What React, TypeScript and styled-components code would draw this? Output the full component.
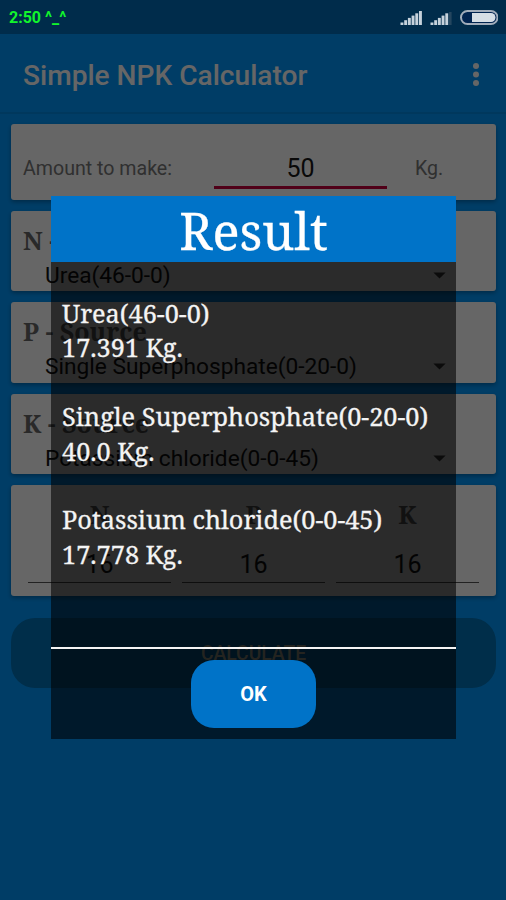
import React from "react";
import styled, { createGlobalStyle } from "styled-components";

const GlobalStyle = createGlobalStyle`
  * { box-sizing: border-box; }
  body { margin: 0; background: #003d68; font-family: Roboto, sans-serif; }
`;

const serif = `"Noto Serif", "Droid Serif", serif`;

const Screen = styled.div`
  position: relative;
  width: 506px;
  height: 900px;
  overflow: hidden;
  background: #0099ff;
`;

const StatusBar = styled.header`
  position: relative;
  z-index: 2;
  height: 34px;
  padding: 0 8px 0 9px;
  display: flex;
  align-items: center;
  justify-content: space-between;
  background: #002c4b;
`;

const Clock = styled.span`
  color: #12f52c;
  font-size: 16px;
  font-weight: 700;
  line-height: 34px;
  padding-top: 2px;
`;

const AppBar = styled.div`
  height: 80px;
  padding: 5px 20px 0 23px;
  display: flex;
  align-items: center;
  justify-content: space-between;
  border-bottom: 2px solid #008de8;
`;

const Title = styled.h1`
  margin: 0;
  color: #fff;
  font-size: 28.1px;
  font-weight: 500;
`;

const Form = styled.main`
  padding: 10px 10px 0 11px;
  display: flex;
  flex-direction: column;
`;

const Card = styled.section<{ $height: number; $gap?: number }>`
  height: ${(p) => p.$height}px;
  margin-bottom: ${(p) => p.$gap ?? 11}px;
  border-radius: 3px;
  background: #fff;
  box-shadow: 0 2px 4px rgba(0, 0, 0, 0.3);
`;

const AmountRow = styled.div`
  display: grid;
  grid-template-columns: 203px 173px 1fr;
  height: 65px;
  padding-top: 24px;
`;

const Caption = styled.span<{ $left: number }>`
  padding-left: ${(p) => p.$left}px;
  color: #787878;
  font-size: 19.6px;
  line-height: 41px;
`;

const Amount = styled.span`
  height: 41px;
  color: #181818;
  font-size: 25px;
  line-height: 41px;
  text-align: center;
  border-bottom: 3px solid #c8003c;
`;

const SourceName = styled.h2`
  margin: 0;
  padding: 13px 0 0 12px;
  color: #686868;
  font: 700 25px/32px ${serif};
  white-space: nowrap;
`;

const Picker = styled.div`
  display: flex;
  align-items: center;
  justify-content: space-between;
  padding: 4px 50px 0 34px;
  color: #151515;
  font-size: 22.7px;
  line-height: 31px;
`;

const Ratios = styled.div`
  display: grid;
  grid-template-columns: repeat(3, 143px);
  column-gap: 11px;
  padding: 13px 0 0 17px;
`;

const Ratio = styled.div`
  height: 85px;
  text-align: center;
  border-bottom: 1px solid #555;
`;

const RatioName = styled.div`
  color: #686868;
  font: 700 25px/32px ${serif};
`;

const RatioValue = styled.div`
  padding-top: 18px;
  color: #181818;
  font-size: 25px;
  line-height: 34px;
`;

const Calculate = styled.button`
  height: 70px;
  border: 0;
  padding: 0;
  border-radius: 24px;
  background: #0073b8;
  color: #d8d8c0;
  font: 500 19.3px/72px Roboto, sans-serif;
`;

const Scrim = styled.div`
  position: absolute;
  inset: 0;
  background: rgba(0, 0, 0, 0.6);
`;

const Dialog = styled.div`
  position: absolute;
  top: 196px;
  left: 51px;
  width: 405px;
  height: 543px;
  display: flex;
  flex-direction: column;
  background: rgba(0, 0, 0, 0.58);
`;

const DialogTitle = styled.h2`
  margin: 0;
  height: 66px;
  background: #0073c8;
  color: #fff;
  font: 400 50.5px/69px ${serif};
  -webkit-text-stroke: 0.3px #fff;
  text-align: center;
`;

const Results = styled.div`
  height: 387px;
  padding: 34px 0 0 11px;
  border-bottom: 2px solid #f4f4f4;
`;

const Result = styled.div`
  height: 103.2px;
  color: #f4f4f4;
  font: 400 25.3px/34.4px ${serif};
  -webkit-text-stroke: 0.3px #f4f4f4;
  white-space: nowrap;
`;

const Ok = styled.button`
  align-self: center;
  width: 125px;
  height: 68px;
  margin-top: 11px;
  padding: 0;
  border: 0;
  border-radius: 23px;
  background: #0073c8;
  color: #fff;
  font: 700 20px/69px Roboto, sans-serif;
`;

const StatusIcons = () => (
  <svg width="100" height="34" viewBox="398 0 100 34">
    <g fill="#c6d2dc">
      {[0, 1, 2, 3, 4, 5].map((i) => (
        <rect key={i} x={400.5 + i * 3.7} y={22.5 - i * 2.3} width="2.9" height={2.5 + i * 2.3} />
      ))}
      {[0, 1, 2, 3, 4].map((i) => (
        <rect key={i} x={430.5 + i * 3.7} y={22.5 - i * 2.3} width="2.9" height={2.5 + i * 2.3} />
      ))}
    </g>
    <rect x="449" y="12" width="2.6" height="13" fill="#24465f" />
    <rect x="461" y="11" width="36.5" height="13" rx="6.5" fill="#002451" stroke="#a1adbb" strokeWidth="2" />
    <path d="M472 13h19a4.5 4.5 0 0 1 0 9H472z" fill="#d5dee5" />
  </svg>
);

const Dots = () => (
  <svg width="20" height="30" viewBox="0 0 20 30" fill="#fff">
    <circle cx="10" cy="5" r="3" />
    <circle cx="10" cy="13.5" r="3" />
    <circle cx="10" cy="22" r="3" />
  </svg>
);

const Caret = () => (
  <svg width="13" height="7" viewBox="0 0 14 8">
    <path d="M0 0.5h14L7 7.5z" fill="#484848" />
  </svg>
);

const sources = [
  { key: "N", value: "Urea(46-0-0)", height: 80 },
  { key: "P", value: "Single Superphosphate(0-20-0)", height: 81 },
  { key: "K", value: "Potassium chloride(0-0-45)", height: 80 },
];

const results = [
  { name: "Urea(46-0-0)", amount: "17.391 Kg." },
  { name: "Single Superphosphate(0-20-0)", amount: "40.0 Kg." },
  { name: "Potassium chloride(0-0-45)", amount: "17.778 Kg." },
];

export default function App() {
  return (
    <>
      <GlobalStyle />
      <Screen>
        <StatusBar>
          <Clock>2:50 ^_^</Clock>
          <StatusIcons />
        </StatusBar>
        <AppBar>
          <Title>Simple NPK Calculator</Title>
          <Dots />
        </AppBar>
        <Form>
          <Card $height={76}>
            <AmountRow>
              <Caption $left={12}>Amount to make:</Caption>
              <Amount>50</Amount>
              <Caption $left={28}>Kg.</Caption>
            </AmountRow>
          </Card>
          {sources.map((s) => (
            <Card key={s.key} $height={s.height}>
              <SourceName>{s.key} - Source</SourceName>
              <Picker>
                {s.value}
                <Caret />
              </Picker>
            </Card>
          ))}
          <Card $height={111} $gap={22}>
            <Ratios>
              {["N", "P", "K"].map((n) => (
                <Ratio key={n}>
                  <RatioName>{n}</RatioName>
                  <RatioValue>16</RatioValue>
                </Ratio>
              ))}
            </Ratios>
          </Card>
          <Calculate>CALCULATE</Calculate>
        </Form>
        <Scrim />
        <Dialog>
          <DialogTitle>Result</DialogTitle>
          <Results>
            {results.map((r) => (
              <Result key={r.name}>
                <div>{r.name}</div>
                <div>{r.amount}</div>
              </Result>
            ))}
          </Results>
          <Ok>OK</Ok>
        </Dialog>
      </Screen>
    </>
  );
}
